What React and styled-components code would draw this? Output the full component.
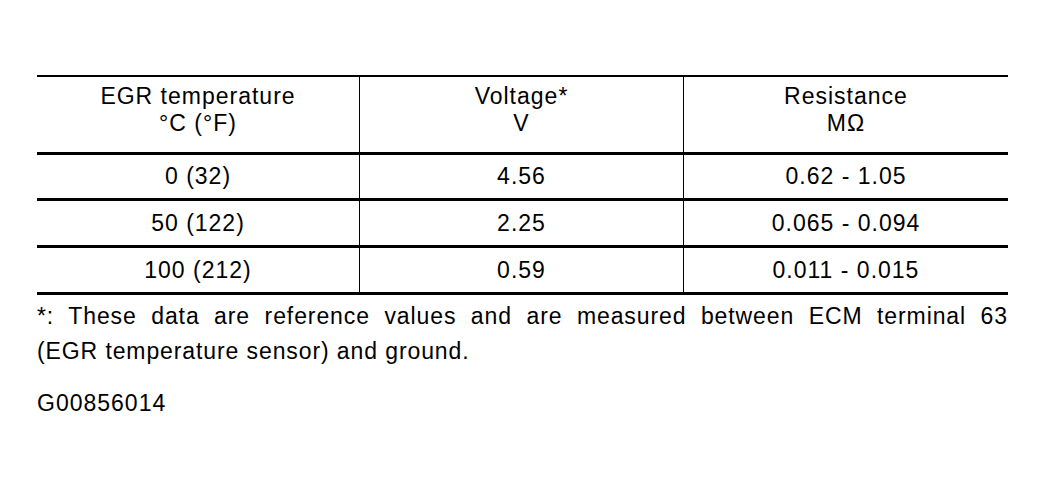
import React from "react";
import styled, { createGlobalStyle } from "styled-components";

const GlobalStyle = createGlobalStyle`
    html, body {
        margin: 0;
        padding: 0;
        background: #FFFFFF;
    }

    body {
        font-family: "Liberation Sans", Arial, sans-serif;
        color: #000000;
    }
`;

const rows = [
    { temp: "0 (32)", voltage: "4.56", resistance: "0.62 - 1.05", height: 43 },
    { temp: "50 (122)", voltage: "2.25", resistance: "0.065 - 0.094", height: 44 },
    { temp: "100 (212)", voltage: "0.59", resistance: "0.011 - 0.015", height: 44 },
];

export default function App() {
    return (
        <Page>
            <GlobalStyle />

            <Table>
                <HeaderRow>
                    <HeaderCell>
                        <span>EGR temperature</span>
                        <span>°C (°F)</span>
                    </HeaderCell>
                    <HeaderCell>
                        <span>Voltage*</span>
                        <span>V</span>
                    </HeaderCell>
                    <HeaderCell>
                        <span>Resistance</span>
                        <span>MΩ</span>
                    </HeaderCell>
                </HeaderRow>

                {rows.map(row => (
                    <Row key={row.temp} height={row.height}>
                        <Cell>{row.temp}</Cell>
                        <Cell>{row.voltage}</Cell>
                        <Cell>{row.resistance}</Cell>
                    </Row>
                ))}
            </Table>

            <Footnote>
                <JustifiedLine>
                    *: These data are reference values and are measured between ECM terminal 63
                </JustifiedLine>
                <span>(EGR temperature sensor) and ground.</span>
            </Footnote>

            <FigureCode>G00856014</FigureCode>
        </Page>
    );
}

const Page = styled.div`
    width: 1045px;
    min-height: 483px;
    padding: 75px 0 0 37px;
    box-sizing: border-box;
`;

const Table = styled.div`
    width: 971px;
    border-top: 2px solid #000000;
    border-bottom: 3px solid #000000;
`;

const HeaderRow = styled.div`
    display: grid;
    grid-template-columns: 322px 324px 325px;
    height: 75px;
    border-bottom: 3px solid #000000;
`;

const HeaderCell = styled.div`
    display: flex;
    flex-direction: column;
    align-items: center;

    padding-top: 6px;
    box-sizing: border-box;

    font-size: 23px;
    line-height: 27px;
    letter-spacing: 1px;

    & + & {
        border-left: 1px solid #000000;
    }
`;

const Row = styled.div`
    display: grid;
    grid-template-columns: 322px 324px 325px;
    height: ${props => props.height}px;

    & + & {
        border-top: 3px solid #000000;
    }
`;

const Cell = styled.div`
    display: flex;
    align-items: center;
    justify-content: center;

    box-sizing: border-box;

    font-size: 23px;
    letter-spacing: 1px;

    & + & {
        border-left: 1px solid #000000;
    }
`;

const Footnote = styled.div`
    display: flex;
    flex-direction: column;

    width: 971px;
    margin-top: 4px;

    font-size: 23px;
    line-height: 35px;
    letter-spacing: 0.9px;
`;

const JustifiedLine = styled.span`
    text-align: justify;
    text-align-last: justify;
`;

const FigureCode = styled.p`
    margin: 17px 0 0 0;

    font-size: 23px;
    line-height: 34px;
    letter-spacing: 1px;
`;
